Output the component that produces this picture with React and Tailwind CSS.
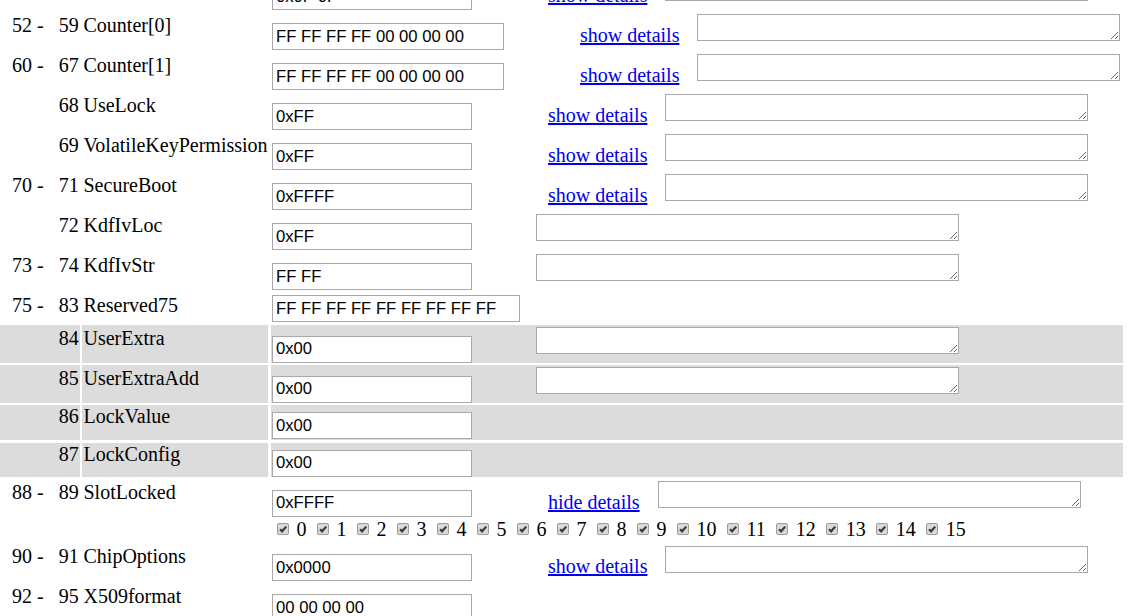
import React from "react";

const T = "h-[37.5px]";

const rows = [
  { s: "", e: "", name: "", val: "0x0F 0F", w: "w-[200px]", link: "show details", ta: true, h: T, pt: "pt-[1.5px]", imt: "mt-[10.5px]" },
  { s: "52 -", e: "59", name: "Counter[0]", val: "FF FF FF FF 00 00 00 00", w: "w-[232px]", link: "show details", ta: true, h: T, pt: "pt-[1.5px]", imt: "mt-[10.5px]" },
  { s: "60 -", e: "67", name: "Counter[1]", val: "FF FF FF FF 00 00 00 00", w: "w-[232px]", link: "show details", ta: true, h: T, pt: "pt-[1.5px]", imt: "mt-[10.5px]" },
  { s: "", e: "68", name: "UseLock", val: "0xFF", w: "w-[200px]", link: "show details", ta: true, h: T, pt: "pt-[1.5px]", imt: "mt-[10.5px]" },
  { s: "", e: "69", name: "VolatileKeyPermission", val: "0xFF", w: "w-[200px]", link: "show details", ta: true, h: T, pt: "pt-[1.5px]", imt: "mt-[10.5px]" },
  { s: "70 -", e: "71", name: "SecureBoot", val: "0xFFFF", w: "w-[200px]", link: "show details", ta: true, h: T, pt: "pt-[1.5px]", imt: "mt-[10.5px]" },
  { s: "", e: "72", name: "KdfIvLoc", val: "0xFF", w: "w-[200px]", ta: true, h: T, pt: "pt-[1.5px]", imt: "mt-[10.5px]" },
  { s: "73 -", e: "74", name: "KdfIvStr", val: "FF FF", w: "w-[200px]", ta: true, h: T, pt: "pt-[1.5px]", imt: "mt-[10.5px]" },
  { s: "75 -", e: "83", name: "Reserved75", val: "FF FF FF FF FF FF FF FF FF", w: "w-[248px]", h: "h-[29.75px]", pt: "pt-[1px]", imt: "mt-[2.5px]" },
  { s: "", e: "84", name: "UserExtra", val: "0x00", w: "w-[200px]", ta: true, grey: true, h: T, pt: "pt-[1.5px]", imt: "mt-[10.5px]" },
  { s: "", e: "85", name: "UserExtraAdd", val: "0x00", w: "w-[200px]", ta: true, grey: true, h: T, pt: "pt-[1.5px]", imt: "mt-[10.5px]" },
  { s: "", e: "86", name: "LockValue", val: "0x00", w: "w-[200px]", grey: true, h: "h-[35px]", pt: "pt-0", imt: "mt-[7px]" },
  { s: "", e: "87", name: "LockConfig", val: "0x00", w: "w-[200px]", grey: true, h: "h-[34.5px]", pt: "pt-0", imt: "mt-[7px]" },
  { s: "88 -", e: "89", name: "SlotLocked", val: "0xFFFF", w: "w-[200px]", link: "hide details", ta: true, boxes: true, h: "h-[62px]", pt: "pt-[1px]", imt: "mt-[10px]" },
  { s: "90 -", e: "91", name: "ChipOptions", val: "0x0000", w: "w-[200px]", link: "show details", ta: true, h: T, pt: "pt-[1px]", imt: "mt-[10px]" },
  { s: "92 -", e: "95", name: "X509format", val: "00 00 00 00", w: "w-[200px]", h: T, pt: "pt-[1px]", imt: "mt-[10px]" },
];

const bits = Array.from({ length: 16 }, (_, i) => i);

const Checkbox = () => (
  <span className="mt-[5px] ml-[5px] flex h-[12px] w-[12px] shrink-0 items-center justify-center rounded-[2px] border border-[#9c9c9c] bg-[#d9d9d9]">
    <svg viewBox="0 0 10 10" className="h-[10px] w-[10px]">
      <path d="M2 5.2 L4.1 7.3 L8.2 2.6" fill="none" stroke="#3c3c3c" strokeWidth="2.2" />
    </svg>
  </span>
);

const Row = ({ r, i }) => {
  const cell = r.grey ? "bg-[#dcdcdc]" : "";
  return (
    <div className={`flex gap-[2.5px] ${r.h}`}>
      <div className={`flex w-[79.75px] shrink-0 justify-between pl-[12px] pr-[1px] leading-[23px] ${r.pt} ${cell}`}>
        <span>{r.s}</span>
        <span>{r.e}</span>
      </div>
      <div className={`w-[186px] shrink-0 whitespace-nowrap pl-[1.25px] leading-[23px] ${r.pt} ${cell}`}>
        {r.name}
      </div>
      <div className={`min-w-0 flex-1 pl-[1.25px] ${cell}`}>
        <div className="flex items-start">
          <input
            readOnly
            value={r.val}
            className={`${r.w} ${r.imt} h-[27px] shrink-0 border border-[#a9a9a9] bg-white pl-[3px] font-['Liberation_Sans',Arial,sans-serif] text-[16.67px] text-black outline-none`}
          />
          {r.link && (
            <a
              href="#"
              className="mt-[11.3px] ml-[76px] shrink-0 whitespace-nowrap leading-[23px] text-[#0000ee] underline"
            >
              {r.link}
            </a>
          )}
          {r.ta && (
            <textarea
              readOnly
              className={`${r.link ? "ml-[18px]" : "ml-[64px]"} mt-[1.5px] h-[27px] w-[423px] shrink-0 resize border border-[#a9a9a9] bg-white`}
            />
          )}
        </div>
        {r.boxes && (
          <div className="mt-[1.5px] flex leading-[23px]">
            {bits.map((b) => (
              <span key={b} className="mr-[5.5px] flex">
                <Checkbox />
                <span className="ml-[7.5px]">{b}</span>
              </span>
            ))}
          </div>
        )}
      </div>
    </div>
  );
};

export default function App() {
  return (
    <div className="h-[616px] w-[1129px] overflow-hidden bg-white font-['Liberation_Serif','Times_New_Roman',serif] text-[20px] text-black">
      <div className="mt-[-27.25px] flex w-[1123px] flex-col gap-[2.5px]">
        {rows.map((r, i) => (
          <Row key={i} r={r} i={i} />
        ))}
      </div>
    </div>
  );
}
